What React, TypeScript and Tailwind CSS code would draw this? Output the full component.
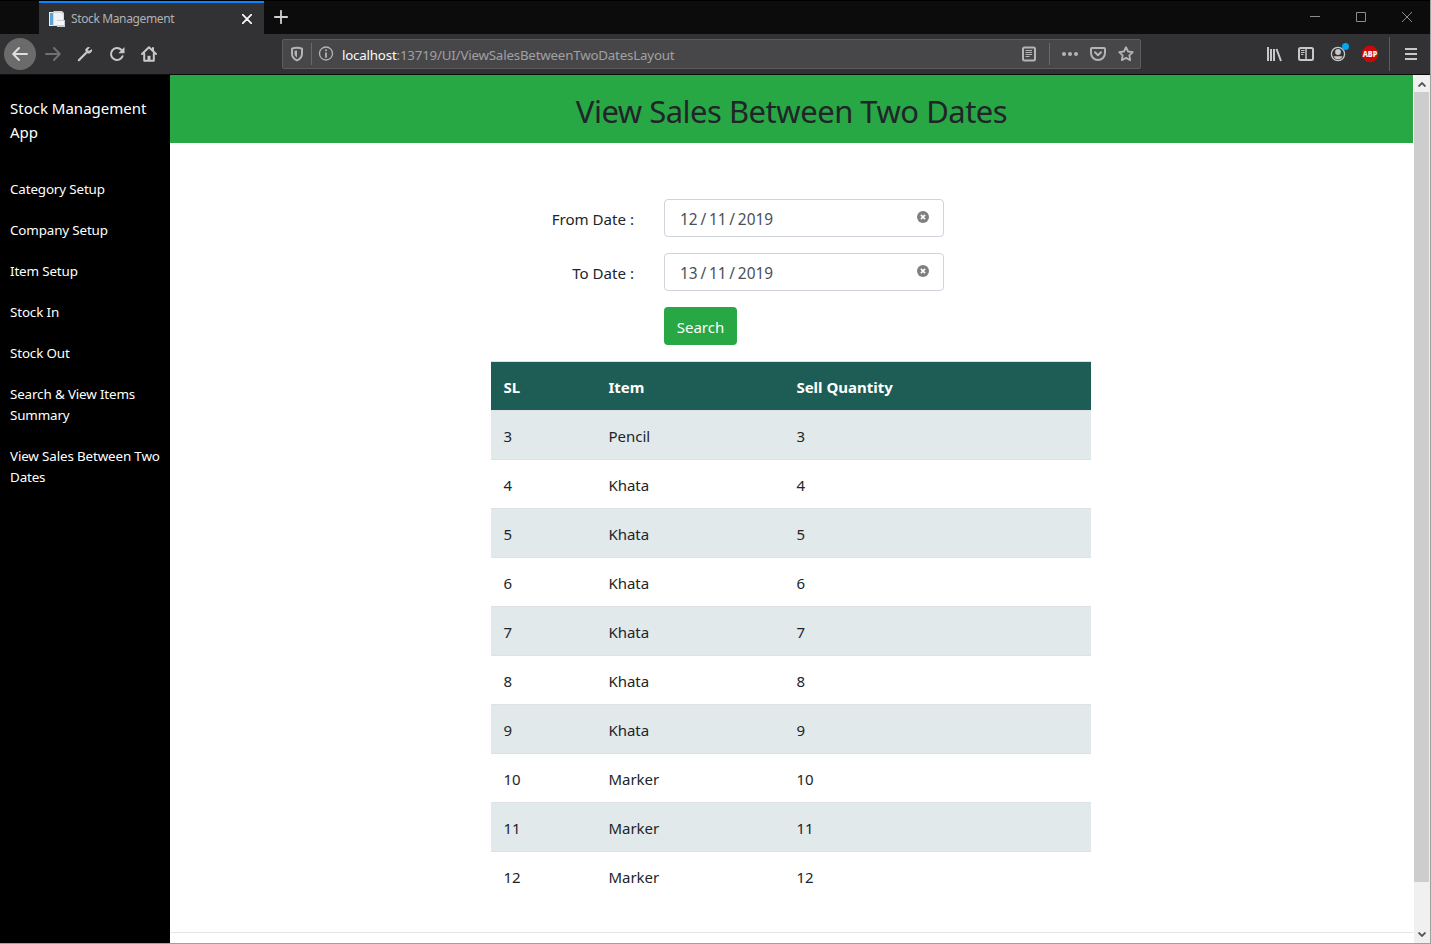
import React from "react";

const links = [
  "Category Setup",
  "Company Setup",
  "Item Setup",
  "Stock In",
  "Stock Out",
  "Search & View Items Summary",
  "View Sales Between Two Dates",
];

const sales: [number, string, number][] = [
  [3, "Pencil", 3],
  [4, "Khata", 4],
  [5, "Khata", 5],
  [6, "Khata", 6],
  [7, "Khata", 7],
  [8, "Khata", 8],
  [9, "Khata", 9],
  [10, "Marker", 10],
  [11, "Marker", 11],
  [12, "Marker", 12],
];

function Icon({ children, size = 16, className = "" }: { children: React.ReactNode; size?: number; className?: string }) {
  return (
    <svg
      width={size}
      height={size}
      viewBox="0 0 16 16"
      fill="none"
      stroke="currentColor"
      strokeWidth="2"
      strokeLinecap="round"
      strokeLinejoin="round"
      className={`shrink-0 overflow-visible ${className}`}
    >
      {children}
    </svg>
  );
}

function TabStrip() {
  return (
    <div className="flex h-[34px] border-t border-black bg-[#0c0c0d]">
      <div className="ml-[39px] flex h-[33px] w-[225px] items-center border-t-2 border-[#0a84ff] bg-[#323234] pl-[10px]">
        <svg width="16" height="16" viewBox="0 0 16 16" className="shrink-0">
          <path d="M0 1h5v14H0z" fill="#e8f1f8" />
          <path d="M1 2h3v12H1z" fill="#5ba4d4" />
          <path d="M4 1l1-1h8l2 2v13H4z" fill="#d5d8db" />
          <path d="M5 2h7l2 2v10H5z" fill="#f1f2f3" />
          <path d="M8 9h8v7H8z" fill="#c3ccd9" />
          <path d="M8 10h7v4H8z" fill="#f4f6fa" />
        </svg>
        <span className="ml-[6px] w-[168px] whitespace-nowrap pt-px text-[12px] tracking-[-0.370px] text-[#b1b1b3]">Stock Management</span>
        <svg width="10" height="10" viewBox="0 0 10 10" className="ml-[3px] shrink-0" stroke="#f9f9fa" strokeWidth="1.700" strokeLinecap="round">
          <path d="M.7.7l8.600 8.600M9.300.7L.7 9.300" />
        </svg>
      </div>
      <svg width="14" height="14" viewBox="0 0 14 14" className="ml-[10px] mt-[9px]" stroke="#d0d0d1" strokeWidth="1.800" strokeLinecap="round">
        <path d="M7 .8v12.400M.8 7h12.400" />
      </svg>
      <div className="ml-auto mr-[18px] flex h-[32px] items-center gap-[36px] text-[#8c8c8c]">
        <svg width="10" height="10" stroke="currentColor"><path d="M0 4.500h10" /></svg>
        <svg width="10" height="10" fill="none" stroke="currentColor"><path d="M.5.5h9v9h-9z" /></svg>
        <svg width="10" height="10" stroke="currentColor"><path d="M0 0l10 10M10 0L0 10" /></svg>
      </div>
    </div>
  );
}

function AddressBar() {
  return (
    <div className="ml-[125px] flex h-[30px] w-[859px] items-center rounded-[2px] border border-[#5c5c5e] bg-[#474749] text-[#b4b4b5]">
      <Icon className="ml-[6px]">
        <path d="M8 1.800c2 0 3.700.3 5 .9v4.800c0 3.400-2 5.700-5 6.900C5 13.200 3 10.900 3 7.500V2.700c1.300-.6 3-.9 5-.9z" />
        <path d="M8 4.500v7C6.500 10.500 5.500 9.200 5.500 7.500V4.700z" fill="currentColor" stroke="none" />
      </Icon>
      <div className="ml-[6px] h-[22px] w-px bg-[#69696b]" />
      <Icon className="ml-[6px]">
        <circle cx="8" cy="7.500" r="6.500" strokeWidth="1.300" />
        <path d="M8 7.200v3.800" strokeWidth="1.800" />
        <path d="M8 4.200v.1" strokeWidth="2" />
      </Icon>
      <span className="ml-[8px] whitespace-nowrap pt-[3px] text-[13.333px] tracking-[-0.200px] text-[#a0a0a2]">
        <span className="text-[#f9f9fa]">localhost</span>:13719/UI/ViewSalesBetweenTwoDatesLayout
      </span>
      <div className="ml-auto flex items-center">
        <Icon>
          <rect x="2" y="1.500" width="12" height="13" rx="1.500" />
          <path d="M4.500 4.500h6.500M4.500 6.500h6.500M4.500 8.500h6.500M4.500 10.500h4" strokeWidth="1" strokeLinecap="butt" />
        </Icon>
        <div className="ml-[12px] h-[22px] w-px bg-[#69696b]" />
        <Icon className="ml-[12px]">
          <g fill="currentColor" stroke="none">
            <circle cx="2" cy="8" r="2" /><circle cx="8" cy="8" r="2" /><circle cx="14" cy="8" r="2" />
          </g>
        </Icon>
        <Icon className="ml-[12px]">
          <path d="M2 2h12a1 1 0 011 1v4a7 7 0 01-14 0V3a1 1 0 011-1z" />
          <path d="M5 6.300l3 3 3-3" />
        </Icon>
        <Icon className="ml-[12px] mr-[6px]">
          <path d="M8 1.200l2.050 4.300 4.750.65-3.450 3.300.85 4.700L8 11.850l-4.200 2.300.85-4.700L1.200 6.150l4.750-.65z" strokeWidth="1.800" />
        </Icon>
      </div>
    </div>
  );
}

function Toolbar() {
  return (
    <div className="flex h-[41px] items-center border-b border-[#0c0c0d] bg-[#323234] text-[#c8c8c9]">
      <div className="ml-[4px] flex h-8 w-8 shrink-0 items-center justify-center rounded-full bg-[#6b6b6c] text-[#dededf]">
        <Icon><path d="M15 8H1.500M7 2L1.200 8 7 14" /></Icon>
      </div>
      <Icon className="ml-[9px] text-[#707072]"><path d="M1 8h13.500M9 2l5.800 6L9 14" /></Icon>
      <Icon className="ml-[16px]">
        <path d="M1.800 14.200L9 7" strokeWidth="2.200" />
        <path d="M12 1.500C9.500 1.300 8.300 3.200 9 5.200c.4 1.200 1 1.700 2.300 1.900 1.900.2 3.500-1.300 3.400-3.400L12 5.500 10.500 4z" fill="currentColor" strokeWidth="1" />
      </Icon>
      <Icon className="ml-[16px]">
        <path d="M13.600 10.200A6 6 0 1112.300 3.800L13.500 5" />
        <path d="M15.500 1v6.200H9.300z" fill="currentColor" stroke="none" />
      </Icon>
      <Icon className="ml-[16px]">
        <path d="M1 8l7-6.800L15 8" />
        <path d="M3.200 7.500v7.300h9.600V7.500M12 2v2.500" />
        <path d="M6.500 14V9.800h3V14z" fill="currentColor" stroke="none" />
      </Icon>
      <AddressBar />
      <div className="ml-auto flex items-center">
        <Icon>
          <path d="M2 1v14M5 3v12M8 3v12M10.500 3l4.500 12" strokeLinecap="butt" />
        </Icon>
        <Icon className="ml-[16px]">
          <rect x="1" y="2" width="14" height="12" rx="1.500" />
          <path d="M8 2v12" strokeWidth="1.500" />
          <path d="M3 4.500h3.500M3 6.500h3.500M3 8.500h2.500" strokeWidth="1" strokeLinecap="butt" />
        </Icon>
        <div className="relative ml-[16px]">
          <Icon>
            <circle cx="8" cy="8" r="6.600" strokeWidth="1.300" />
            <circle cx="8" cy="6" r="2.900" fill="currentColor" stroke="none" />
            <path d="M3.500 10.200c2 .2 7 .2 9 0a4.800 4.800 0 01-9 0z" fill="currentColor" stroke="none" />
          </Icon>
          <div className="absolute -right-[3px] -top-[3px] h-[7px] w-[7px] rounded-full bg-[#00a7f5]" />
        </div>
        <svg width="16" height="16" viewBox="0 0 16 16" className="ml-[16px]">
          <path d="M4.700 0h6.600L16 4.700v6.600L11.300 16H4.700L0 11.300V4.700z" fill="#cc0909" />
          <text x="8" y="10.900" textAnchor="middle" fontSize="8" fontWeight="800" fill="#fff" textLength="14.500" lengthAdjust="spacingAndGlyphs">ABP</text>
        </svg>
        <div className="ml-[11px] h-[34px] w-px bg-[#5c5c5e]" />
        <svg width="12" height="12" className="ml-[15px] mr-[13px]" stroke="currentColor" strokeWidth="2"><path d="M0 1h12M0 6h12M0 11h12" /></svg>
      </div>
    </div>
  );
}

function DateField({ label, value }: { label: string; value: string }) {
  return (
    <div className="mb-4 flex h-[38px]">
      <label className="w-[173px] pt-[8px] text-right text-[15.100px] leading-6">{label}</label>
      <div className="ml-[30px] flex h-[38px] w-[280px] justify-between rounded-[4px] border border-[#ced4da] pl-[15px] pr-[14px]">
        <span className="whitespace-pre pt-[8px] text-[15.400px] leading-6 text-[#495057] [word-spacing:-1.200px]">{value}</span>
        <svg width="12" height="12" viewBox="0 0 12 12" className="mt-[11px]">
          <circle cx="6" cy="6" r="6" fill="#7f7f7f" />
          <path d="M3.900 3.900l4.200 4.200M8.100 3.900L3.900 8.100" stroke="#fff" strokeWidth="1.600" />
        </svg>
      </div>
    </div>
  );
}

export default function App() {
  return (
    <div className="flex h-[944px] w-[1431px] flex-col overflow-hidden border-r border-[#a0a0a0] bg-white font-['Noto_Sans','Open_Sans',sans-serif] text-[#212529]">
      <TabStrip />
      <Toolbar />
      <div className="flex h-[868px]">
        <nav className="w-[170px] bg-black text-white">
          <div className="pl-[10px] pt-[21px] text-[15px] leading-6">Stock Management<br />App</div>
          <ul className="mt-[35px]">
            {links.map((l) => (
              <li key={l} className="mb-5 pl-[10px] pr-[8px] text-[13.400px] leading-[21px] tracking-[-0.140px]">{l}</li>
            ))}
          </ul>
        </nav>
        <main className="w-[1243px]">
          <h2 className="flex h-[68px] items-center justify-center bg-[#28a745] pt-[3px] text-[31px] leading-[38px] tracking-[-0.500px]">View Sales Between Two Dates</h2>
          <div className="ml-[321px] w-[600px] pt-[56px]">
            <div className="-ml-[30px]">
              <DateField label="From Date :" value="12 / 11 / 2019" />
              <DateField label="To Date :" value="13 / 11 / 2019" />
            </div>
            <button className="ml-[173px] block h-[38px] w-[73px] rounded-[4px] bg-[#28a745] pt-[2px] text-[15px] text-white">Search</button>
            <table className="mt-4 w-[600px] table-fixed border-separate border-spacing-0 text-left text-[15px] leading-6">
              <colgroup>
                <col className="w-[105px]" />
                <col className="w-[188px]" />
                <col className="w-[307px]" />
              </colgroup>
              <thead>
                <tr className="h-[49px] bg-[#1d5d55] text-white">
                  {["SL", "Item", "Sell Quantity"].map((h) => (
                    <th key={h} className="border-t border-[#dee2e6] pl-[12.400px] pt-px font-bold">{h}</th>
                  ))}
                </tr>
              </thead>
              <tbody>
                {sales.map((row) => (
                  <tr key={row[0]} className="h-[49px] odd:bg-[#e1e9ea]">
                    {row.map((c, i) => (
                      <td key={i} className="border-t border-[#dee2e6] pl-[12.400px] pt-px">{c}</td>
                    ))}
                  </tr>
                ))}
              </tbody>
            </table>
          </div>
          <div className="mt-[32px] border-t border-[#e5e5e5]" />
        </main>
        <div className="ml-px flex w-4 flex-col items-center bg-[#f0f0f0] text-[#555]">
          <svg width="8" height="5" viewBox="0 0 8 5" className="mt-[7px] shrink-0" fill="none" stroke="currentColor" strokeWidth="1.800"><path d="M.5 4.500L4 1l3.500 3.500" /></svg>
          <div className="mt-[5px] h-[790px] w-[15px] shrink-0 self-start bg-[#cdcdcd]" />
          <svg width="8" height="5" viewBox="0 0 8 5" className="mb-[6px] mt-auto shrink-0" fill="none" stroke="currentColor" strokeWidth="1.800"><path d="M.5.500L4 4 7.500.500" /></svg>
        </div>
      </div>
      <div className="h-px bg-[#a0a0a0]" />
    </div>
  );
}
